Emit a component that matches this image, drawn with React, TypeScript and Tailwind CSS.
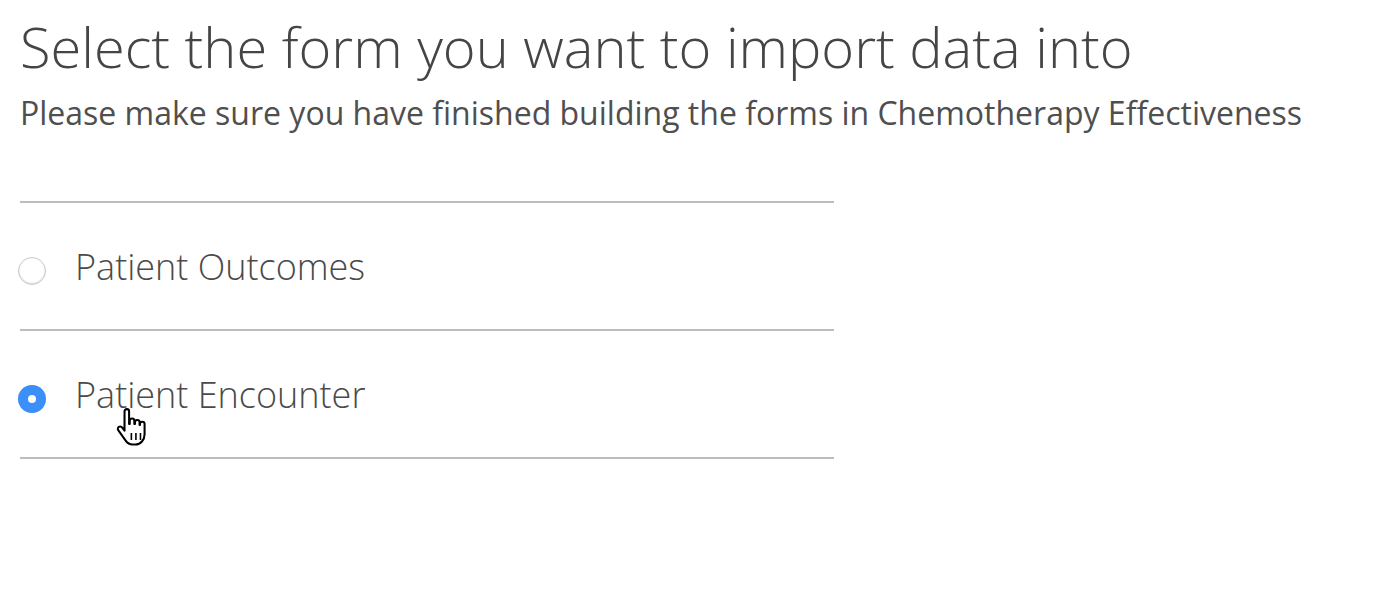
import React from "react";

function HandCursor() {
  return (
    <svg width="39" height="41" viewBox="0 0 17 18" className="absolute left-[113px] top-[408px] pointer-events-none">
      <path
        d="M5 1.5c0-.6.4-1 1-1s1 .4 1 1V7h.3V5.6c0-.6.4-1 1-1s1 .4 1 1V7h.3V6.3c0-.6.4-1 1-1s1 .4 1 1V7.5h.2V7c0-.6.4-1 1-1s1 .4 1 1v4.5c0 2.5-1.7 4.5-4 4.5H8.5c-1.4 0-2.3-.7-3-1.7L2.3 9.8c-.4-.5-.3-1.2.2-1.5.5-.3 1.1-.2 1.5.3L5 10V1.5z"
        fill="#fff"
        stroke="#000"
        strokeWidth="0.9"
        strokeLinejoin="round"
      />
      <path d="M8 11v3M10 11v3M12 11v3" stroke="#000" strokeWidth="0.7" />
    </svg>
  );
}

function Row({ label, selected }: { label: string; selected: boolean }) {
  return (
    <label className="flex items-center h-[128px] border-b-2 border-[#bdbdbd] cursor-pointer">
      {selected ? (
        <span className="w-[28px] h-[28px] rounded-full bg-[#3a8ff8] flex items-center justify-center ml-[-2px] mt-[10px]">
          <span className="w-[8px] h-[8px] rounded-full bg-white" />
        </span>
      ) : (
        <span className="w-[28px] h-[28px] rounded-full bg-white border border-[#c8c8c8] shadow-[inset_0_-1px_2px_rgba(0,0,0,0.15)] ml-[-2px] mt-[10px]" />
      )}
      <span className="ml-[29px] mt-[2px] text-[36px] font-light text-[#4a4a4a] leading-none">{label}</span>
    </label>
  );
}

export default function App() {
  return (
    <div className="relative w-[1400px] h-[590px] bg-white px-[20px]" style={{ fontFamily: '"Open Sans", sans-serif' }}>
      <h1 className="pt-[13px] text-[56px] font-light text-[#454545] leading-[66px]">
        Select the form you want to import data into
      </h1>
      <p className="mt-[14px] text-[32px] text-[#4f4f4f] leading-[40px]">
        Please make sure you have finished building the forms in Chemotherapy Effectiveness
      </p>
      <div className="mt-[68px] w-[814px] border-t-2 border-[#bdbdbd]">
        <Row label="Patient Outcomes" selected={false} />
        <Row label="Patient Encounter" selected={true} />
      </div>
      <HandCursor />
    </div>
  );
}
